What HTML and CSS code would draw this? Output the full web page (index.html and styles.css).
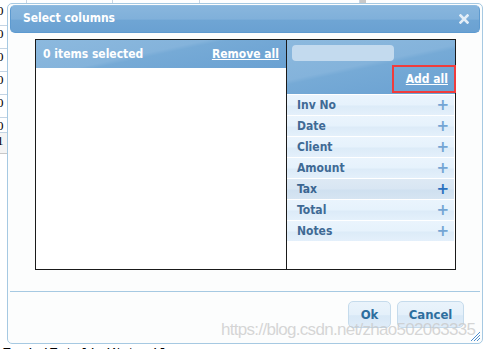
FILE: index.html
```html
<!DOCTYPE html>
<html>
<head>
<meta charset="utf-8">
<link rel="stylesheet" href="styles.css">
</head>
<body>
<div class="page">
  <div class="topstrip">
    <span class="tc c1"></span><span class="tc c2"></span><span class="tc c3"></span><span class="tc c4"></span><span class="tc c5"></span>
  </div>
  <div class="rows">
    <div class="row">0</div>
    <div class="row">0</div>
    <div class="row">0</div>
    <div class="row">0</div>
    <div class="row">0</div>
    <div class="row short">0</div>
    <div class="row head">1</div>
  </div>
  <div class="code">Tax','Total','Notes']</div>
</div>

<div class="dialog">
  <div class="titlebar">
    <span class="title">Select columns</span>
    <svg class="close" width="10" height="10" viewBox="0 0 10 10"><path d="M1.5 1.5 L8.5 8.5 M8.5 1.5 L1.5 8.5" stroke="#e4eef7" stroke-width="2.6" stroke-linecap="square"/></svg>
  </div>
  <div class="content">
    <div class="box">
      <div class="selected">
        <div class="lhead">
          <span>0 items selected</span>
          <a class="link">Remove all</a>
        </div>
      </div>
      <div class="available">
        <div class="rhead">
          <div class="search"></div>
          <div class="addwrap"><a class="link">Add all</a></div>
        </div>
        <ul class="list">
          <li><span>Inv No</span><b class="plus">+</b></li>
          <li><span>Date</span><b class="plus">+</b></li>
          <li><span>Client</span><b class="plus">+</b></li>
          <li><span>Amount</span><b class="plus">+</b></li>
          <li class="hover"><span>Tax</span><b class="plus">+</b></li>
          <li><span>Total</span><b class="plus">+</b></li>
          <li><span>Notes</span><b class="plus">+</b></li>
        </ul>
      </div>
    </div>
  </div>
  <div class="footer">
    <button class="btn ok">Ok</button>
    <button class="btn cancel">Cancel</button>
  </div>
  <div class="watermark">https://blog.csdn.net/zhao502063335</div>
  <svg class="grip" width="11" height="11" viewBox="0 0 11 11"><path d="M10 1 L1 10 M10 4 L4 10 M10 7 L7 10" stroke="#4f8fcf" stroke-width="1"/></svg>
</div>
</body>
</html>
```
FILE: styles.css
```css
html, body {
  margin: 0;
  padding: 0;
  background: #fff;
}
body {
  width: 489px;
  height: 349px;
  overflow: hidden;
  position: relative;
  font-family: "DejaVu Sans Condensed", "DejaVu Sans", sans-serif;
}
.page {
  display: flex;
  flex-direction: column;
}
.topstrip {
  height: 3px;
  display: flex;
}
.tc {
  height: 3px;
  border-right: 1px solid #c9d6e3;
}
.c1 { width: 26px; }
.c2 { width: 85px; }
.c3 { width: 86px; }
.c4 { width: 159px; }
.c5 { width: 6px; background: #c9c9c9; border: none; }
.rows {
  height: 340px;
  width: 12px;
}
.row {
  height: 22px;
  border-bottom: 1px solid #c3d4e4;
  font: 13px "Liberation Serif", serif;
  line-height: 16px;
  text-indent: -3px;
  color: #000;
  overflow: hidden;
}
.row.short { height: 14px; }
.row.head { height: 20px; background: #f4f4f4; border-bottom: 1px solid #c8c8c8; }
.code {
  font: 13px "Liberation Mono", monospace;
  line-height: 14px;
  padding: 4px 0 0 3px;
  color: #000;
}

.dialog {
  position: absolute;
  left: 7px;
  top: 3px;
  width: 470px;
  height: 336px;
  padding: 1px 2px 2px 2px;
  border: 1px solid #a6c9e2;
  border-radius: 5px;
  background: #fcfdfd;
  display: flex;
  flex-direction: column;
}
.titlebar {
  height: 26px;
  flex: none;
  border: 1px solid #5d9ad0;
  border-top-color: #8fbbe0;
  border-radius: 5px;
  background: linear-gradient(#88b6dd 0%, #80b0da 50%, #6fa5d4 55%, #6aa1d2 100%);
  display: flex;
  align-items: center;
  justify-content: space-between;
  padding: 0 10px 0 12px;
}
.title {
  color: #fff;
  font-weight: bold;
  font-size: 12px;
  position: relative;
  top: -1px;
}
.close { display: block; }
.content {
  height: 258px;
  flex: none;
  padding: 6px 24px 0 25px;
  box-sizing: border-box;
}
.box {
  height: 231px;
  box-sizing: border-box;
  border: 1px solid #1a1a1a;
  display: flex;
  background: #fff;
}
.selected {
  width: 250px;
  border-right: 1px solid #1a1a1a;
}
.lhead, .rhead {
  background: linear-gradient(168deg, #8cb9de 0%, #84b3db 45%, #76aad6 50%, #6aa1d2 100%);
  color: #fff;
  font-weight: bold;
  font-size: 12px;
}
.lhead {
  height: 28px;
  display: flex;
  align-items: center;
  justify-content: space-between;
  padding: 0 7px;
}
.link {
  color: #fff;
  text-decoration: underline;
}
.available {
  width: 168px;
}
.rhead {
  height: 54px;
  display: flex;
  flex-direction: column;
  justify-content: space-between;
  padding: 5px 0 0 5px;
  box-sizing: border-box;
}
.search {
  width: 102px;
  height: 16px;
  background: #c3daee;
  border-radius: 4px;
}
.addwrap {
  align-self: flex-end;
  width: 54px;
  height: 24px;
  border: 2px solid #f03c3c;
  display: flex;
  align-items: center;
  justify-content: flex-end;
  padding-right: 6px;
  margin-right: -1px;
  margin-bottom: 1px;
}
.list {
  list-style: none;
  margin: 1px 1px 0 0;
  padding: 0;
}
.list li {
  height: 20px;
  margin-bottom: 1px;
  display: flex;
  align-items: center;
  justify-content: space-between;
  padding: 0 5px 0 10px;
  background: linear-gradient(#eaf4fd 0%, #e6f2fc 50%, #dcebf8 55%, #e4f0fb 100%);
  color: #3f6a95;
  font-weight: bold;
  font-size: 12px;
}
.list li.hover {
  background: linear-gradient(#dde9f4 0%, #d8e6f3 50%, #cfe0f0 55%, #d6e5f2 100%);
  color: #3a6590;
}
.plus {
  color: #74a5d4;
  font-family: "DejaVu Sans", sans-serif;
  font-size: 15px;
  font-weight: bold;
}
.hover .plus { color: #2a70bd; }
.footer {
  flex: 1;
  border-top: 1px solid #a6c9e2;
  display: flex;
  justify-content: flex-end;
  align-items: flex-start;
  gap: 6px;
  padding: 9px 16px 0 0;
}
.btn {
  height: 27px;
  border: 1px solid #c5dbec;
  border-radius: 5px;
  background: linear-gradient(#eaf3fb 0%, #e4f0fa 50%, #d8e8f6 55%, #dfecf8 100%);
  color: #2e6e9e;
  font-family: "DejaVu Sans Condensed", "DejaVu Sans", sans-serif;
  font-weight: bold;
  font-size: 13px;
  padding: 0;
}
.ok { width: 43px; }
.cancel { width: 67px; }
.watermark {
  position: absolute;
  left: 213px;
  top: 316px;
  font: 17px "Liberation Sans", sans-serif;
  letter-spacing: -0.7px;
  color: rgba(200, 200, 200, 0.75);
  white-space: nowrap;
}
.grip {
  position: absolute;
  right: 1px;
  bottom: 1px;
}
```
